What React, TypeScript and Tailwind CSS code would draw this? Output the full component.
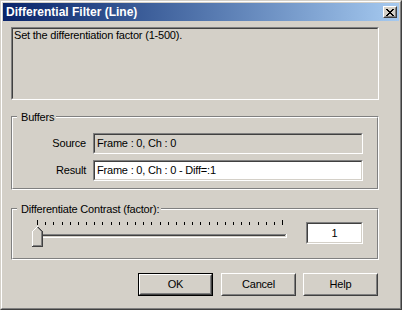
import React from "react";

function Sunken({
  outer,
  inner,
  children,
}: {
  outer: string;
  inner: string;
  children?: React.ReactNode;
}) {
  return (
    <div className={"border border-t-[#808080] border-l-[#808080] border-b-white border-r-white " + outer}>
      <div className={"h-full border border-t-[#404040] border-l-[#404040] border-b-[#D4D0C8] border-r-[#D4D0C8] " + inner}>
        {children}
      </div>
    </div>
  );
}

function Group({
  label,
  outer,
  inner,
  children,
}: {
  label: string;
  outer: string;
  inner: string;
  children?: React.ReactNode;
}) {
  return (
    <div className={"relative border border-t-[#808080] border-l-[#808080] border-b-white border-r-white " + outer}>
      <div className={"h-full border border-t-white border-l-white border-b-[#808080] border-r-[#808080] " + inner}>
        {children}
      </div>
      <span className="absolute left-[5px] top-[-6px] pl-[4px] pr-[2px] bg-[#D4D0C8] leading-[13px] text-[11px] text-black whitespace-nowrap">
        {label}
      </span>
    </div>
  );
}

function Button({ label, isDefault, cls }: { label: string; isDefault?: boolean; cls: string }) {
  if (isDefault) {
    return (
      <div className={"w-[75px] h-[23px] border border-black " + cls}>
        <div className="h-full border border-t-white border-l-white border-b-[#404040] border-r-[#404040]">
          <div className="h-full border border-t-[#D4D0C8] border-l-[#D4D0C8] border-b-[#808080] border-r-[#808080] flex items-center justify-center leading-[13px] text-[11px]">
            {label}
          </div>
        </div>
      </div>
    );
  }
  return (
    <div className={"w-[75px] h-[23px] border border-t-white border-l-white border-b-[#404040] border-r-[#404040] " + cls}>
      <div className="h-full border border-t-[#D4D0C8] border-l-[#D4D0C8] border-b-[#808080] border-r-[#808080] flex items-center justify-center leading-[13px] text-[11px]">
        {label}
      </div>
    </div>
  );
}

function Slider() {
  const ticks = Array.from({ length: 31 }, (_, i) => 9 + Math.round((i * 245) / 30));
  const fillRows: React.ReactNode[] = [];
  for (let r = 10; r <= 30; r++) {
    const half = r < 15 ? r - 10 : 5;
    fillRows.push(<rect key={"f" + r} x={9 - half} y={r} width={half * 2 + 1} height={1} fill="#D4D0C8" />);
  }
  const px: React.ReactNode[] = [];
  for (let k = 0; k <= 5; k++) {
    px.push(<rect key={"w" + k} x={9 - k} y={10 + k} width={1} height={1} fill="#ffffff" />);
    if (k >= 1) px.push(<rect key={"d" + k} x={9 + k} y={10 + k} width={1} height={1} fill="#404040" />);
    if (k <= 4) px.push(<rect key={"g" + k} x={9 + k} y={11 + k} width={1} height={1} fill="#808080" />);
  }
  return (
    <svg width={262} height={32} shapeRendering="crispEdges" className="block">
      {ticks.map((x, i) => (
        <rect
          key={i}
          x={x}
          y={i === 0 || i === 30 ? 4 : 6}
          width={1}
          height={i === 0 || i === 30 ? 5 : 3}
          fill="#000"
        />
      ))}
      {/* track */}
      <rect x={9} y={18} width={249} height={1} fill="#808080" />
      <rect x={9} y={18} width={1} height={3} fill="#808080" />
      <rect x={10} y={19} width={247} height={1} fill="#404040" />
      <rect x={10} y={19} width={1} height={2} fill="#404040" />
      <rect x={11} y={20} width={246} height={1} fill="#D4D0C8" />
      <rect x={257} y={19} width={1} height={2} fill="#D4D0C8" />
      <rect x={9} y={21} width={250} height={1} fill="#ffffff" />
      <rect x={258} y={18} width={1} height={4} fill="#ffffff" />
      {/* thumb */}
      {fillRows}
      <rect x={4} y={15} width={1} height={15} fill="#ffffff" />
      <rect x={14} y={15} width={1} height={16} fill="#404040" />
      <rect x={4} y={30} width={11} height={1} fill="#404040" />
      <rect x={13} y={16} width={1} height={14} fill="#808080" />
      <rect x={5} y={29} width={9} height={1} fill="#808080" />
      {px}
    </svg>
  );
}

export default function App() {
  return (
    <div className="w-[402px] h-[310px] bg-[#D4D0C8] border border-t-[#D4D0C8] border-l-[#D4D0C8] border-b-[#404040] border-r-[#404040] font-['Liberation_Sans',Arial,sans-serif] text-black overflow-hidden">
      <div className="h-full border border-t-white border-l-white border-b-[#808080] border-r-[#808080] p-px">
        {/* Title bar */}
        <div className="h-[18px] bg-linear-to-r from-[#0A246A] to-[#A6CAF0] flex items-center pl-[3px] pr-[2px]">
          <span className="flex-1 text-white font-bold text-[12px] leading-[18px] whitespace-nowrap">
            Differential Filter (Line)
          </span>
          <div className="w-[14px] h-[12px] border border-t-white border-l-white border-b-[#404040] border-r-[#404040] bg-[#D4D0C8]">
            <div className="h-full border border-t-[#D4D0C8] border-l-[#D4D0C8] border-b-[#808080] border-r-[#808080] flex items-center justify-center">
              <svg width="8" height="7" shapeRendering="crispEdges">
                <path d="M0 0h2v1h-2zM6 0h2v1h-2zM1 1h2v1h-2zM5 1h2v1h-2zM2 2h4v1h-4zM3 3h2v1h-2zM2 4h4v1h-4zM1 5h2v1h-2zM5 5h2v1h-2zM0 6h2v1h-2zM6 6h2v1h-2z" fill="#000" />
              </svg>
            </div>
          </div>
        </div>

        {/* Content */}
        <div className="pl-[8px] w-[376px] flex flex-col text-[11px] tracking-[-0.2px]">
          <Sunken outer="mt-[6px] h-[73px]" inner="pl-px leading-[13px]">
            Set the differentiation factor (1-500).
          </Sunken>

          <Group label="Buffers" outer="mt-[16px] h-[74px]" inner="pt-[15px]">
            <div className="flex items-center h-[21px]">
              <span className="w-[73px] text-right leading-[13px]">Source</span>
              <Sunken outer="ml-[7px] w-[270px] h-[21px]" inner="bg-[#D4D0C8] pl-[2px] leading-[17px] whitespace-nowrap">
                Frame : 0, Ch : 0
              </Sunken>
            </div>
            <div className="flex items-center h-[21px] mt-[6px]">
              <span className="w-[73px] text-right leading-[13px]">Result</span>
              <Sunken outer="ml-[7px] w-[270px] h-[21px]" inner="bg-white pl-[2px] leading-[17px] whitespace-nowrap">
                Frame : 0, Ch : 0 - Diff=:1
              </Sunken>
            </div>
          </Group>

          <Group label="Differentiate Contrast (factor):" outer="mt-[18px] h-[52px]" inner="flex items-start">
            <div className="ml-[15px] mt-[6px]">
              <Slider />
            </div>
            <Sunken outer="ml-[16px] mt-[12px] w-[57px] h-[22px]" inner="bg-white flex items-center justify-center leading-[13px]">
              1
            </Sunken>
          </Group>

          <div className="flex mt-[13px] pl-[127px]">
            <Button label="OK" isDefault cls="" />
            <Button label="Cancel" cls="ml-[8px]" />
            <Button label="Help" cls="ml-[7px]" />
          </div>
        </div>
      </div>
    </div>
  );
}
